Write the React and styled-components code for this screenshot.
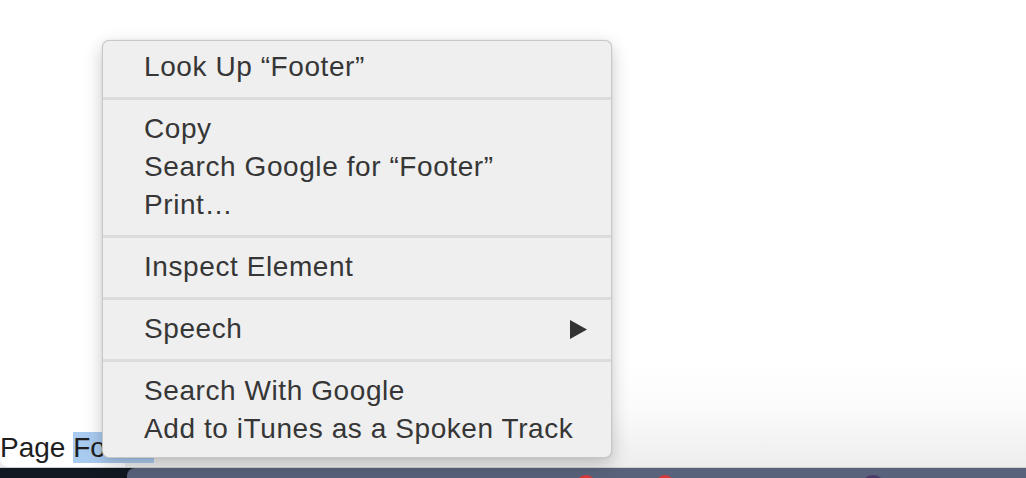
import React from "react";
import styled, { createGlobalStyle } from "styled-components";

const GlobalStyle = createGlobalStyle`
  html, body { margin: 0; padding: 0; background: #ffffff; overflow: hidden; }
  body { font-family: "Liberation Sans", Arial, Helvetica, sans-serif; }
`;

const Page = styled.div`
  position: relative;
  width: 1026px;
  height: 478px;
  display: flex;
  flex-direction: column;
  background: #ffffff;
`;

const Content = styled.div`
  flex: 1;
  background: #ffffff;
`;

const FooterBand = styled.div`
  height: 107px;
  display: flex;
  align-items: flex-end;
  background: linear-gradient(to bottom, #ffffff 0%, #fbfbfb 45%, #ededed 100%);
  border-bottom: 1px solid #cfcfcf;
`;

const FooterLabel = styled.div`
  width: 125px;
  height: 107px;
  box-sizing: border-box;
  padding-bottom: 3px;
  display: flex;
  align-items: flex-end;
  background: #ffffff;
  border-bottom-left-radius: 9px;
`;

const LabelText = styled.p`
  margin: 0;
  white-space: nowrap;
  font-size: 28px;
  line-height: 32px;
  color: #1e1e1e;
`;

const Selected = styled.span`
  background: #aacbf0;
`;

const Dock = styled.div`
  height: 10px;
  display: flex;
  background: #111821;
`;

const DockLeft = styled.div`
  width: 127px;
  background: #111821;
`;

const DockShelf = styled.div`
  flex: 1;
  display: flex;
  align-items: flex-start;
  padding-top: 7px;
  background: #58627a;
  border-top-left-radius: 8px;
  overflow: hidden;
`;

const DockIcon = styled.div`
  flex: none;
  width: ${(p) => p.size}px;
  height: ${(p) => p.size}px;
  margin-left: ${(p) => p.offset}px;
  border-radius: 50%;
  background: ${(p) => p.color};
`;

const Menu = styled.div`
  position: absolute;
  left: 102px;
  top: 40px;
  width: 510px;
  box-sizing: border-box;
  padding: 7px 0 9px;
  background: #efefef;
  border: 1px solid rgba(0, 0, 0, 0.16);
  border-radius: 7px;
  box-shadow: 0 6px 18px rgba(0, 0, 0, 0.22), 0 0 2px rgba(0, 0, 0, 0.1);
  display: flex;
  flex-direction: column;
`;

const Item = styled.div`
  height: 38px;
  display: flex;
  align-items: center;
  justify-content: space-between;
  padding: 0 24px 0 41px;
  font-size: 28px;
  letter-spacing: 0.58px;
  color: #363636;
  white-space: nowrap;
`;

const Separator = styled.div`
  height: 3px;
  margin: 11px 0 10px;
  background: #dcdcdc;
`;

const Arrow = () => (
  <svg width="17" height="19" viewBox="0 0 17 19" aria-hidden="true">
    <path d="M0 0 L17 9.5 L0 19 Z" fill="#333333" />
  </svg>
);

export default function App() {
  return (
    <>
      <GlobalStyle />
      <Page>
        <Content />
        <FooterBand>
          <FooterLabel>
            <LabelText>
              Page <Selected>Footer</Selected>
            </LabelText>
          </FooterLabel>
        </FooterBand>
        <Dock>
          <DockLeft />
          <DockShelf>
            <DockIcon size={20} offset={449} color="#d93a3a" />
            <DockIcon size={18} offset={60} color="#d83838" />
            <DockIcon size={24} offset={187} color="#4a3a6a" />
          </DockShelf>
        </Dock>
        <Menu>
          <Item>Look Up “Footer”</Item>
          <Separator />
          <Item>Copy</Item>
          <Item>Search Google for “Footer”</Item>
          <Item>Print…</Item>
          <Separator />
          <Item>Inspect Element</Item>
          <Separator />
          <Item>
            Speech
            <Arrow />
          </Item>
          <Separator />
          <Item>Search With Google</Item>
          <Item>Add to iTunes as a Spoken Track</Item>
        </Menu>
      </Page>
    </>
  );
}
